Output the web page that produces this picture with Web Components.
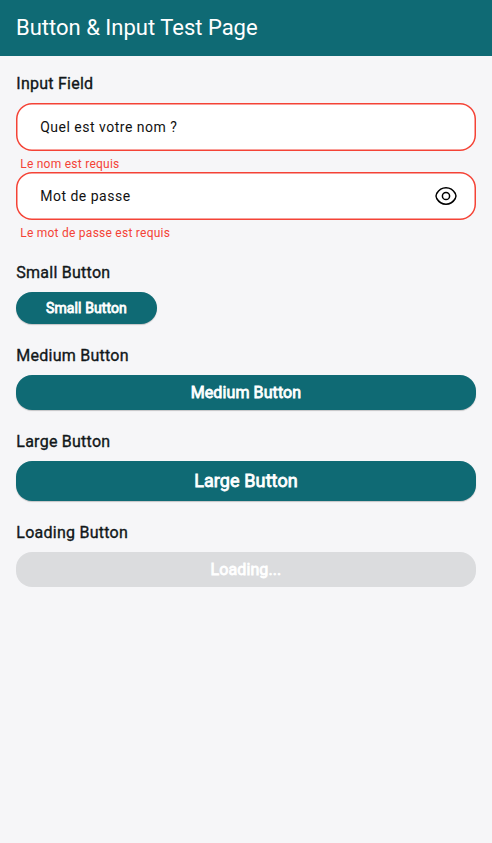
<!DOCTYPE html>
<html lang="fr"><head><meta charset="utf-8"><title>Button &amp; Input Test Page</title>
<style>body{margin:0;background:#f6f6f8}</style></head><body>
<test-page>
<app-bar slot="bar">Button &amp; Input Test Page</app-bar>
<form-section heading="Input Field">
<input-field error="Le nom est requis">Quel est votre nom ?</input-field>
<input-field error="Le mot de passe est requis" secret>Mot de passe</input-field>
</form-section>
<form-section heading="Small Button"><action-button style="--w:141px;--h:32px;--fs:14px">Small Button</action-button></form-section>
<form-section heading="Medium Button"><action-button style="--h:35px;--fs:16px">Medium Button</action-button></form-section>
<form-section heading="Large Button"><action-button style="--h:40px;--fs:18px;--lift:2px">Large Button</action-button></form-section>
<form-section heading="Loading Button"><action-button disabled style="--h:35px;--fs:16px">Loading...</action-button></form-section>
</test-page>
<script>
const define=(name,html,setup)=>customElements.define(name,class extends HTMLElement{
  connectedCallback(){
    if(this.shadowRoot)return;
    this.attachShadow({mode:"open"}).innerHTML=html;
    if(setup)setup(this,this.shadowRoot);
  }
});
define("test-page",`<style>
:host{display:block;min-height:100vh;font-family:Roboto,sans-serif;color:#12181a;background:#f6f6f8}
main{padding:16px;display:flex;flex-direction:column;gap:20px}
</style><slot name="bar"></slot><main><slot></slot></main>`);
define("app-bar",`<style>
:host{display:flex;align-items:center;height:56px;padding:0 16px;background:#0f6a74;color:#fff;font-size:22px;line-height:28px}
</style><slot></slot>`);
define("form-section",`<style>
:host{display:block}
h2{margin:0 0 8px;padding-left:.3px;font-size:16px;font-weight:400;line-height:23px;letter-spacing:.25px;-webkit-text-stroke:.35px currentColor}
</style><h2></h2><slot></slot>`,(el,root)=>root.querySelector("h2").textContent=el.getAttribute("heading"));
define("input-field",`<style>
:host{display:block;height:69px}
.box{box-sizing:border-box;height:48px;box-shadow:inset 0 0 0 1.5px #f44336;border-radius:16px;background:#fff;display:flex;align-items:center;justify-content:space-between;padding:0 18px 0 24.2px;font-size:14px;letter-spacing:.5px;color:#111}
.error{padding:5px 0 0 4.2px;font-size:12px;line-height:16px;letter-spacing:.25px;color:#f44336}
svg{display:none;width:24px;height:24px}
:host([secret]) svg{display:block}
</style><div class="box"><slot></slot><svg viewBox="0 0 24 24" fill="none" stroke="#000" stroke-width="1.5"><path d="M12 3.800c3.900 0 7.100 2 9.300 5.700.9 1.600.9 3.400 0 5-2.200 3.700-5.400 5.700-9.300 5.700s-7.100-2-9.300-5.700c-.9-1.600-.9-3.400 0-5C4.900 5.800 8.100 3.800 12 3.800Z"/><circle cx="12" cy="12" r="3.600"/></svg></div><div class="error"></div>`,(el,root)=>root.querySelector(".error").textContent=el.getAttribute("error"));
define("action-button",`<style>
:host{box-sizing:border-box;display:flex;align-items:center;justify-content:center;width:var(--w,100%);height:var(--h);padding-bottom:var(--lift,0);border-radius:16px;background:#0f6a74;color:#fff;font-size:var(--fs);font-weight:400;letter-spacing:.1px;-webkit-text-stroke:.8px currentColor;box-shadow:0 1px 1px #0003}
:host([disabled]){background:#dbdcde;box-shadow:none}
</style><slot></slot>`);
</script></body></html>
